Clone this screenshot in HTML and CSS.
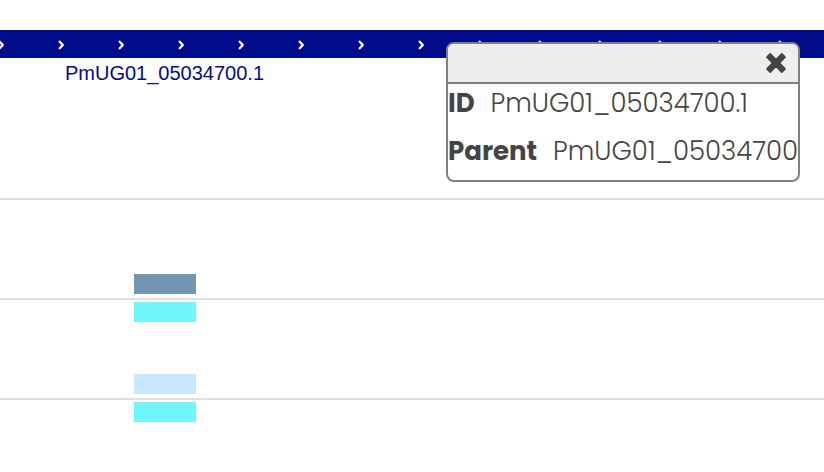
FILE: index.html
```html
<!DOCTYPE html>
<html lang="en">
<head>
<meta charset="utf-8">
<title>PmUG01_05034700.1</title>
<link rel="stylesheet" href="styles.css">
</head>
<body>
<main class="browser">
  <section class="track track-gene">
    <svg class="transcript" aria-hidden="true">
      <defs>
        <pattern id="strand" x="-29" y="0" width="60" height="28" patternUnits="userSpaceOnUse">
          <path d="M28.7 11.7 L31.8 15 L28.7 18.3" fill="none" stroke="#fff" stroke-width="2.3" stroke-linecap="round" stroke-linejoin="round"/>
        </pattern>
      </defs>
      <rect width="100%" height="100%" fill="url(#strand)"/>
    </svg>
    <div class="gene-label">PmUG01_05034700.1</div>
  </section>
  <section class="track track-first">
    <div class="feature steel"></div>
  </section>
  <section class="track track-pair">
    <div class="feature cyan"></div>
    <div class="feature pale"></div>
  </section>
  <section class="track-last">
    <div class="feature cyan"></div>
  </section>

  <aside class="popup">
    <header class="popup-header">
      <button class="close" type="button" aria-label="Close">
        <svg width="22" height="22" viewBox="0 0 22 22" aria-hidden="true">
          <path d="M11 7.8 L16.8 2 L20 5.2 L14.2 11 L20 16.8 L16.8 20 L11 14.2 L5.2 20 L2 16.8 L7.8 11 L2 5.2 L5.2 2 Z" fill="#444" stroke="#444" stroke-width="1.8" stroke-linejoin="round"/>
        </svg>
      </button>
    </header>
    <dl class="details">
      <div class="row"><dt>ID</dt><dd>PmUG01_05034700.1</dd></div>
      <div class="row"><dt>Parent</dt><dd>PmUG01_05034700</dd></div>
    </dl>
  </aside>
</main>
</body>
</html>
```
FILE: styles.css
```css
* {
  box-sizing: border-box;
}

body {
  margin: 0;
  background: #fff;
}

.browser {
  position: relative;
  min-height: 100vh;
  padding-top: 30px;
  overflow: hidden;
}

.track {
  display: flex;
  flex-direction: column;
  border-bottom: 2px solid #e0e0e0;
}

.track-gene {
  height: 170px;
}

.transcript {
  display: block;
  width: 100%;
  height: 28px;
  background: #000c8c;
}

.gene-label {
  padding-left: 65px;
  color: #000c8c;
  font: 20px/30px "Liberation Sans", Arial, sans-serif;
}

.track-first {
  padding: 74px 0 4px;
}

.track-pair {
  gap: 52px;
  padding: 2px 0 4px;
}

.track-last {
  padding-top: 2px;
}

.feature {
  width: 62px;
  height: 20px;
  margin-left: 134px;
}

.steel {
  background: #7296b0;
}

.cyan {
  background: #71f6fd;
}

.pale {
  background: #c8e6ff;
}

.popup {
  position: absolute;
  top: 42px;
  right: 24px;
  width: 354px;
  overflow: hidden;
  border: 2px solid #808080;
  border-radius: 8px;
  background: #fff;
  color: #444;
  font: 300 26px/38px Poppins, Inter, sans-serif;
}

.popup-header {
  display: flex;
  align-items: center;
  justify-content: flex-end;
  height: 40px;
  padding-right: 11px;
  border-bottom: 2px solid #808080;
  background: #eee;
}

.close {
  display: flex;
  padding: 0;
  border: 0;
  background: none;
  cursor: pointer;
}

.details {
  margin: 0;
}

.row {
  display: flex;
  gap: 16px;
  padding-bottom: 10px;
  white-space: nowrap;
}

dt {
  font-weight: 700;
}

dd {
  margin: 0;
}
```
